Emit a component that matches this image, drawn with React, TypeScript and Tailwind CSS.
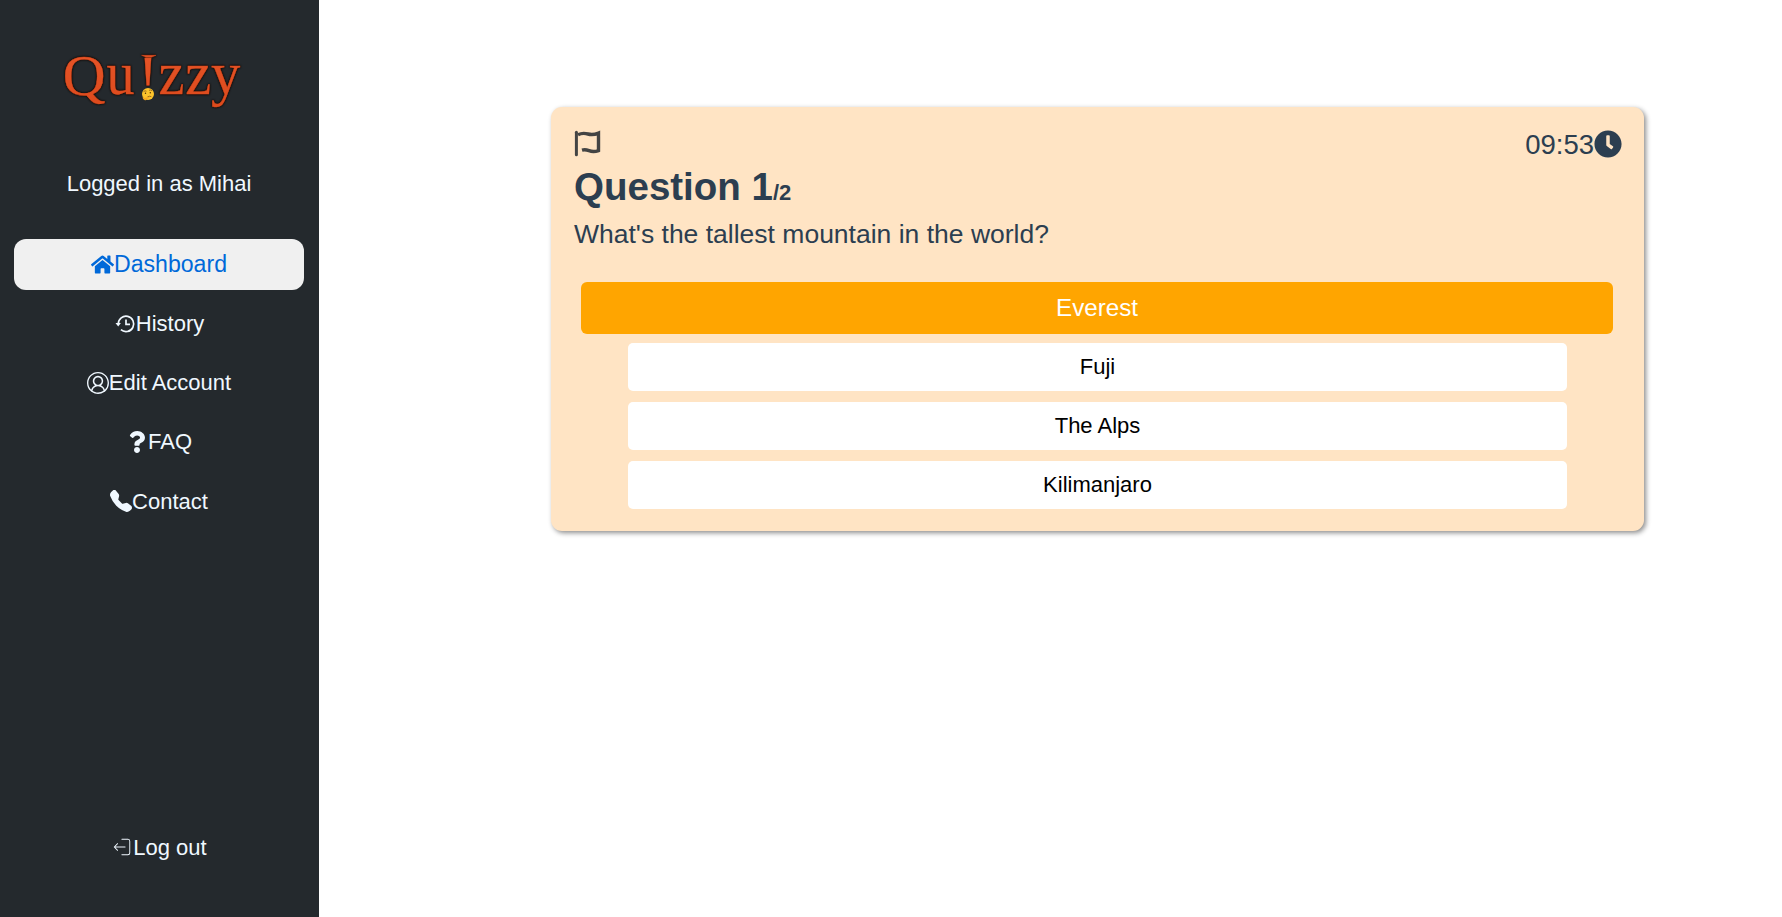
import { FaHome, FaQuestion, FaClock } from "react-icons/fa";
import { VscAccount } from "react-icons/vsc";
import { BsTelephoneFill } from "react-icons/bs";
import { CiLogout } from "react-icons/ci";
import type { ReactNode } from "react";

function Logo() {
  return (
    <svg width="200" height="120" viewBox="55 15 200 120" className="block overflow-visible">
      <defs>
        <linearGradient id="ember" x1="0" y1="0" x2="0" y2="1">
          <stop offset="0" stopColor="#e8562a" />
          <stop offset="1" stopColor="#dc4a1c" />
        </linearGradient>
      </defs>
      <g
        fill="url(#ember)"
        stroke="#de4c1f"
        strokeWidth="0.4"
        fontFamily="Liberation Serif, serif"
        fontSize="61"
        className="[filter:drop-shadow(0_0_1px_#140a06)_drop-shadow(0_0_0.5px_#140a06)]"
      >
        <text transform="translate(62.800 94.500) scale(1.040 1)" fontSize="57">Q</text>
        <text transform="translate(106.500 94) scale(.92 1)">u</text>
        <text transform="translate(138 97)" fontSize="60">!</text>
        <path d="M141.500 55.300h14.500l-4.500 2h-5.500z" strokeWidth="0.5" />
        <text transform="translate(158.500 93.500) scale(.96 1)">z</text>
        <text transform="translate(185.200 93.500) scale(.96 1)">z</text>
        <text transform="translate(211 93.500) scale(.96 1)">y</text>
      </g>
      <circle cx="148" cy="94" r="6" fill="#fcc42c" />
      <path d="M143.500 91.700q1.500-1.500 3-.5M149 90.300q2-.9 3 .6M147.500 96.800q2-1 3.800-.2" fill="none" stroke="#7a4a12" strokeWidth=".7" />
      <circle cx="145.500" cy="93.200" r=".7" fill="#4a2c0a" />
      <circle cx="150.300" cy="92.800" r=".7" fill="#4a2c0a" />
      <path d="M142.800 96l1.500 2 5-1.300v1.300l-2.500 1c.5 1-1 1.500-2.300 1-1.700-.8-2-2-1.700-4z" fill="#f6a922" />
    </svg>
  );
}

function HistoryIcon() {
  return (
    <svg width="22" height="22" viewBox="0 0 22 22" fill="none" stroke="currentColor" strokeWidth="1.700">
      <path d="M4.300 11a7.700 7.700 0 1 1 2.600 5.700" />
      <path d="M12 6.500v4.800h4" />
      <path d="M1.500 10h5.400l-2.700 3.400z" fill="currentColor" stroke="none" />
    </svg>
  );
}

function FlagIcon() {
  return (
    <svg width="28" height="28" viewBox="573 130 28 28" fill="none" stroke="#444" strokeWidth="3">
      <path d="M576.400 132.200v22.500" strokeLinecap="round" />
      <path d="M578 134.700c4-2 7-1.600 10-.7s6 .9 10.500-.9v17.500c-4 1.500-6.500 1.300-9.500.1-2.500-1-4.500-1.300-7-.6" strokeWidth="3.400" />
    </svg>
  );
}

function NavItem({ icon, label }: { icon: ReactNode; label: string }) {
  return (
    <div className="flex h-[59.2px] items-center justify-center text-[22px]">
      {icon}
      <span>{label}</span>
    </div>
  );
}

function Answer({ label }: { label: string }) {
  return (
    <button className="h-12 w-[939px] rounded-[5px] bg-white pb-[2px] text-[22px] text-black">{label}</button>
  );
}

export default function App() {
  return (
    <div className="flex h-[917px] w-[1782px] bg-white font-['Liberation_Sans',Arial,sans-serif]">
      <aside className="flex w-[319px] shrink-0 flex-col bg-[#24292d] text-[#f0f8ff]">
        <div className="mt-[15px] ml-[55px]"><Logo /></div>
        <p className="mt-[32px] w-[318px] text-center text-[22px] leading-[33px]">Logged in as Mihai</p>
        <nav className="mt-[35px] w-[318px]">
          <div className="flex h-[59px] items-center justify-center">
            <div className="flex h-[51px] w-[290px] items-center justify-center rounded-[12px] bg-[#f0f0f0] text-[23.1px] text-[#0069d9]">
              <FaHome size={23} /><span>Dashboard</span>
            </div>
          </div>
          <NavItem icon={<HistoryIcon />} label="History" />
          <NavItem icon={<VscAccount size={22} />} label="Edit Account" />
          <NavItem icon={<FaQuestion size={22} />} label="FAQ" />
          <NavItem icon={<BsTelephoneFill size={22} />} label="Contact" />
        </nav>
        <div className="mt-auto mb-[40px] w-[318px]">
          <NavItem icon={<CiLogout size={22} />} label="Log out" />
        </div>
      </aside>
      <main className="flex flex-1 justify-center pt-[107px] pl-[94px]">
        <section className="flex h-[424px] w-[1093px] flex-col rounded-[11px] bg-[#ffe4c4] px-[22px] pt-[22px] text-[#2c3e50] shadow-[2px_2px_5px_rgba(0,0,0,0.45)]">
          <div className="flex h-[30px] items-center justify-between">
            <FlagIcon />
            <div className="flex items-center text-[27.5px]"><span className="pt-[2px]">09:53</span><FaClock size={28} /></div>
          </div>
          <h1 className="mt-px pl-px text-[38.5px] leading-[53px] font-bold">Question 1<span className="text-[22px]">/2</span></h1>
          <p className="-mt-[5px] pl-px text-[26.5px] leading-[40px]">What's the tallest mountain in the world?</p>
          <div className="mt-[30px] flex flex-col items-center gap-[11px]">
            <button className="-my-[2.4px] mr-px h-[52.8px] w-[1032px] rounded-[6px] bg-[#ffa500] text-[24.2px] text-white">Everest</button>
            <Answer label="Fuji" />
            <Answer label="The Alps" />
            <Answer label="Kilimanjaro" />
          </div>
        </section>
      </main>
    </div>
  );
}
